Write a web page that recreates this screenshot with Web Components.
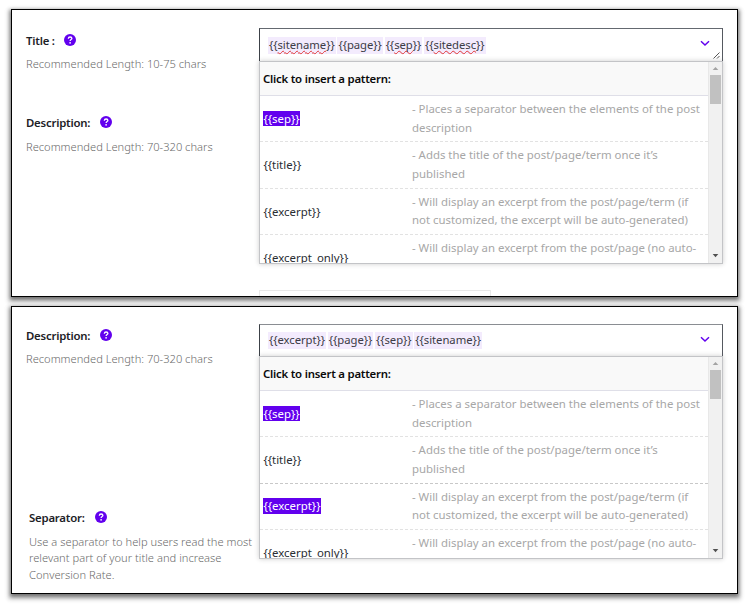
<!DOCTYPE html>
<html lang="en">
<head>
<meta charset="utf-8">
<title>SEO snippet patterns</title>
<style>
body{margin:0;padding:9px 0 0 11px;width:752px;height:609px;box-sizing:border-box;overflow:hidden;background:#fff;font-family:"Noto Sans","Open Sans",sans-serif;font-size:11.3px;color:#23282d;display:flex;flex-direction:column;gap:9px}
</style>
</head>
<body>
<settings-panel>
  <field-label slot="labels" heading="Title :" style="--gap:9px">Recommended Length: 10-75 chars</field-label>
  <field-label slot="labels" heading="Description:" style="margin-top:41px;--drop:8px">Recommended Length: 70-320 chars</field-label>
  <pattern-field slot="field" style="--top:18px;--input:33px;--line:#646970" resizable value="sitename page sep sitedesc" misspelt="sitename sep sitedesc">
    <pattern-row name="sep" selected>- Places a separator between the elements of the post<br>description</pattern-row>
    <pattern-row name="title">- Adds the title of the post/page/term once it’s<br>published</pattern-row>
    <pattern-row name="excerpt">- Will display an excerpt from the post/page/term (if<br>not customized, the excerpt will be auto-generated)</pattern-row>
    <pattern-row name="excerpt_only">- Will display an excerpt from the post/page (no auto-<br>generated)</pattern-row>
  </pattern-field>
  <next-field slot="field"></next-field>
</settings-panel>
<settings-panel>
  <field-label slot="labels" heading="Description:" style="margin-top:-2px">Recommended Length: 70-320 chars</field-label>
  <field-label slot="labels" heading="Separator:" style="margin:141px 0 0 3px;--lead:16.3px;--ls:.02px;--drop:8px">Use a separator to help users read the most<br>relevant part of your title and increase<br>Conversion Rate.</field-label>
  <pattern-field slot="field" style="--top:17px;--input:32px;--line:#8a8d92" value="excerpt page sep sitename">
    <pattern-row name="sep" selected>- Places a separator between the elements of the post<br>description</pattern-row>
    <pattern-row name="title" strong>- Adds the title of the post/page/term once it’s<br>published</pattern-row>
    <pattern-row name="excerpt" selected>- Will display an excerpt from the post/page/term (if<br>not customized, the excerpt will be auto-generated)</pattern-row>
    <pattern-row name="excerpt_only">- Will display an excerpt from the post/page (no auto-<br>generated)</pattern-row>
  </pattern-field>
</settings-panel>
<script>
const define=(name,html)=>customElements.define(name,class extends HTMLElement{
  constructor(){super();this.attachShadow({mode:'open'})}
  connectedCallback(){this.shadowRoot.innerHTML=typeof html==='function'?html(this):html}
});
const braces=s=>'{{'+s+'}}';

define('settings-panel',`<style>
:host{display:flex;box-sizing:border-box;width:727px;height:288px;flex:none;border:1px solid #000;background:#fff;box-shadow:0 2px 4px 1px rgba(0,0,0,.5),0 3px 4px 3px rgba(0,0,0,.12)}
.labels{width:233px;box-sizing:border-box;padding:21px 0 0 14px;flex:none;white-space:nowrap}
.field{margin-left:14px;width:464px;height:286px}
</style><div class="labels"><slot name="labels"></slot></div><div class="field"><slot name="field"></slot></div>`);

define('help-icon',`<style>:host{display:block;width:12px;height:12px}svg{display:block}</style>
<svg width="12" height="12" viewBox="0 0 12 12"><circle cx="6" cy="6" r="6" fill="#6200ee"/><path d="M4.3 4.7C4.4 3.5 5.1 3 6.1 3c1.1 0 1.8.6 1.8 1.5C7.9 5.6 6.2 5.6 6.1 7" fill="none" stroke="#fff" stroke-width="1.3"/><circle cx="6.1" cy="8.8" r=".85" fill="#fff"/></svg>`);

define('field-label',e=>`<style>
:host{display:block}
.h{display:flex;align-items:center;height:18px;gap:var(--gap,10px);font-weight:600;color:#1c2126;font-size:11.4px;letter-spacing:-.22px}
.t{margin-top:var(--drop,7px);font-weight:300;font-size:11.13px;color:#6a6a6a;line-height:var(--lead,16px);letter-spacing:var(--ls,0)}
</style><div class="h"><span>${e.getAttribute('heading')}</span><help-icon></help-icon></div><div class="t"><slot></slot></div>`);

define('pattern-field',e=>{
  const bad=(e.getAttribute('misspelt')||'').split(' ');
  const chips=e.getAttribute('value').split(' ').map(v=>`<span class="chip">${bad.includes(v)?`{{<u>${v}</u>}}`:braces(v)}</span>`).join('');
  return `<style>
:host{display:block;padding-top:var(--top);width:464px}
.input{position:relative;box-sizing:border-box;height:var(--input);border:1px solid var(--line);border-left-color:#3c4147;border-right-color:#555960;border-bottom:0;display:flex;align-items:center;padding:0 12px 0 8px;gap:1.8px;color:#3c3c46}
.chip{background:#f3ebfd;height:17px;line-height:16px;padding:0 1px;letter-spacing:-.05px}
u{text-decoration:underline wavy #e03535 .8px;text-underline-offset:1px;text-decoration-skip-ink:none}
.chev{margin-left:auto;margin-top:-3px}
.grip{position:absolute;right:2px;bottom:2px}
.menu{box-sizing:border-box;width:464px;height:203px;border:1px solid #c3c4c7;background:#fff;display:flex;box-shadow:0 0 5px rgba(0,0,0,.2)}
.list{flex:1;overflow:hidden}
.head{box-sizing:border-box;height:34px;background:#f9f9f9;border-bottom:1px solid #dfdfe8;font-weight:600;color:#0a0a0a;line-height:33px;padding-left:3px;font-size:11.4px;letter-spacing:-.23px}
.bar{width:14px;background:#f1f1f1;display:flex;flex-direction:column;align-items:center;border-left:1px solid #e8e8e8;box-sizing:border-box}
.thumb{width:11px;height:29px;background:#c1c1c1}
svg{flex:none}
</style><div class="input">${chips}<svg class="chev" width="10" height="7" viewBox="0 0 10 7"><path d="M1 1.3L5 5 9 1.3" fill="none" stroke="#6200ee" stroke-width="1.5"/></svg>
${e.hasAttribute('resizable')?'<svg class="grip" width="7" height="7" viewBox="0 0 7 7"><path d="M.5 6.5L6.5.5M4 6.5L6.5 4" stroke="#555" fill="none"/></svg>':''}</div>
<div class="menu"><div class="list"><div class="head">Click to insert a pattern:</div><slot></slot></div>
<div class="bar"><svg width="13" height="13"><path d="M3.7 8L6.5 4.9 9.3 8z" fill="#a3a3a3"/></svg><div class="thumb"></div><svg width="13" height="13" style="margin-top:auto"><path d="M3.7 4L6.5 7.2 9.3 4z" fill="#505050"/></svg></div></div>`});

define('pattern-row',e=>`<style>
:host{display:grid;grid-template-columns:148px 1fr;align-items:center;box-sizing:border-box;height:46.4px;padding-left:3.4px;border-bottom:1px dashed ${e.hasAttribute('strong')?'#c8c8c8':'#e2e2e2'};white-space:nowrap}
.n{justify-self:start;font-size:11.42px;line-height:15px;height:15.5px;color:#2a2e33}
.sel{background:#6200ee;color:#fff;margin-top:-.6px}
.d{font-size:11.42px;line-height:18.8px;color:#a7a7a7;padding-left:.6px}
</style><span class="n ${e.hasAttribute('selected')?'sel':''}">${braces(e.getAttribute('name'))}</span><span class="d"><slot></slot></span>`);

define('next-field',`<style>:host{display:block;box-sizing:border-box;width:232px;height:6px;margin-top:26px;border:1px solid #e9e9e9;border-bottom:0}</style>`);
</script>
</body>
</html>
